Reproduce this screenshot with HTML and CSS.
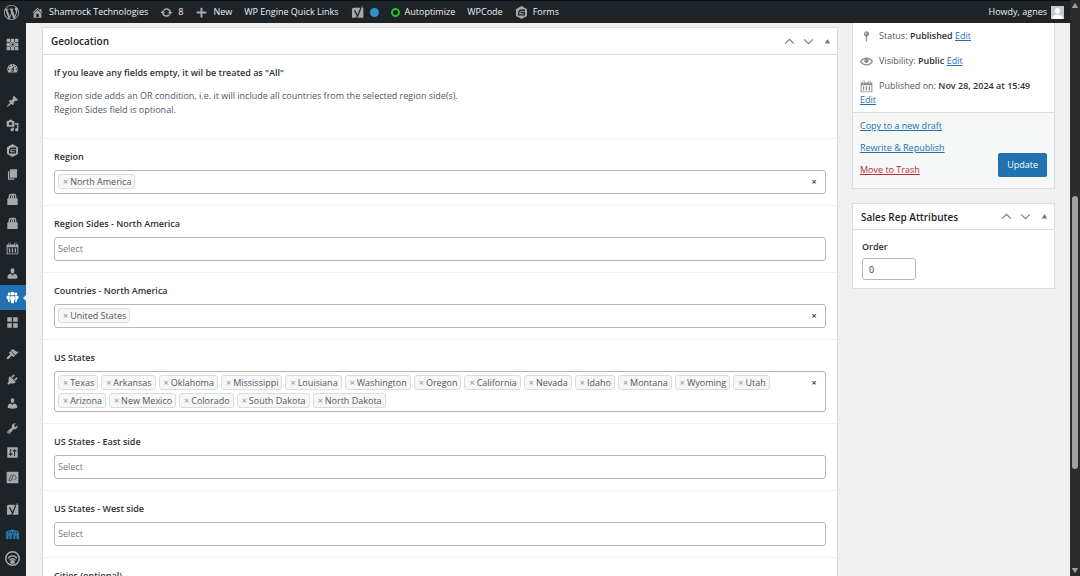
FILE: index.html
```html
<!DOCTYPE html>
<html lang="en">
<head>
    <meta charset="UTF-8">
    <meta name="viewport" content="width=device-width, initial-scale=1.0">
    <title>Edit Sales Rep</title>
    <link rel="stylesheet" href="styles.css">
</head>
<body>
    <svg class="sprite" aria-hidden="true">
        <symbol id="i-wp" viewBox="0 0 20 20"><path d="M20 10c0-5.51-4.49-10-10-10C4.48 0 0 4.49 0 10c0 5.52 4.48 10 10 10 5.51 0 10-4.48 10-10zM7.78 15.37L4.37 6.22c.55-.02 1.17-.08 1.17-.08.5-.06.44-1.13-.06-1.11 0 0-1.45.11-2.37.11-.18 0-.37 0-.58-.01C4.12 2.69 6.87 1.11 10 1.11c2.33 0 4.45.87 6.05 2.34-.68-.11-1.65.39-1.65 1.58 0 .74.45 1.36.9 2.1.35.61.55 1.36.55 2.46 0 1.49-1.4 5-1.4 5l-3.03-8.37c.54-.02.82-.17.82-.17.5-.05.44-1.25-.06-1.22 0 0-1.44.12-2.38.12-.87 0-2.33-.12-2.33-.12-.5-.03-.56 1.2-.06 1.22l.92.08 1.26 3.41zM17.41 10c.24-.64.74-1.87.43-4.25.7 1.29 1.05 2.71 1.05 4.25 0 3.29-1.73 6.24-4.4 7.78.97-2.59 1.94-5.2 2.92-7.78zM6.1 18.09C3.12 16.65 1.11 13.53 1.11 10c0-1.3.23-2.48.72-3.59C3.25 10.3 4.67 14.2 6.1 18.09zm4.03-6.63l2.58 6.98c-.86.29-1.76.45-2.71.45-.79 0-1.57-.11-2.29-.33.81-2.38 1.62-4.74 2.42-7.1z"/></symbol>
        <symbol id="i-home" viewBox="0 0 20 20"><path d="M16 8.5l1.53 1.53-1.06 1.06L10 4.6l-6.47 6.49-1.06-1.06L10 2.5l4 4v-2h2v4zm-6-2.46l6 5.99V18H4v-5.97zM12 17v-5H8v5h4z"/></symbol>
        <symbol id="i-update" viewBox="0 0 20 20"><path d="M10.2 3.28c3.53 0 6.43 2.61 6.92 6h2.08l-3.5 4-3.5-4h2.32c-.45-1.97-2.21-3.45-4.32-3.45-1.45 0-2.73.71-3.54 1.78L4.95 5.66C6.23 4.2 8.11 3.28 10.2 3.28zm-.4 13.44c-3.52 0-6.43-2.61-6.92-6H.8l3.5-4c1.17 1.33 2.33 2.67 3.5 4H5.48c.45 1.97 2.21 3.45 4.32 3.45 1.45 0 2.73-.71 3.54-1.78l1.71 1.95c-1.28 1.46-3.15 2.38-5.25 2.38z"/></symbol>
        <symbol id="i-plus" viewBox="0 0 20 20"><path d="M8.5 2.500h3v6h6v3h-6v6h-3v-6h-6v-3h6z"/></symbol>
        <symbol id="i-yoast" viewBox="0 0 20 20"><path d="M4 2.500h15v15.500H1.500V5A2.500 2.500 0 0 1 4 2.500z"/><path class="cut" d="M5.500 6.500l4 8M16 1l-6 15q-1 3-4 3"/><path class="line thin" d="M17.500 0l-2 5"/></symbol>
        <symbol id="i-gravity" viewBox="0 0 20 20"><path d="M10 0l7.500 4.300q1 .6 1 1.700v8q0 1.100-1 1.700L10 20l-7.500-4.300q-1-.6-1-1.700V6q0-1.100 1-1.700z"/><path class="cut" d="M15.500 6.500H9Q5.500 6.500 5.500 13.500h9V10H8.500"/></symbol>
        <symbol id="i-grid" viewBox="0 0 20 20"><path fill-rule="evenodd" d="M1 1h5.500v5.500H1zM7.500 1h5v5.500h-5zM13.500 1H19v5.500h-5.500zM1 7.500h5.500v5H1zM13.500 7.500H19v5h-5.500zM1 13.500h5.500V19H1zM7.500 13.500h5V19h-5zM13.500 13.500H19V19h-5.500zM6 6h8v8H6zM8.500 8.500v3h3v-3z"/></symbol>
        <symbol id="i-dash" viewBox="0 0 20 20"><path d="M3.760 16h12.480c1.100-1.370 1.760-3.110 1.760-5 0-4.420-3.580-8-8-8s-8 3.580-8 8c0 1.890.66 3.630 1.760 5zM10 4c.55 0 1 .45 1 1s-.45 1-1 1-1-.45-1-1 .45-1 1-1zM6 6c.55 0 1 .45 1 1s-.45 1-1 1-1-.45-1-1 .45-1 1-1zm8 0c.55 0 1 .45 1 1s-.45 1-1 1-1-.45-1-1 .45-1 1-1zm-5.370 5.550L12 7v6c0 1.100-.9 2-2 2s-2-.9-2-2c0-.57.24-1.080.63-1.450zM4 10c.55 0 1 .45 1 1s-.45 1-1 1-1-.45-1-1 .45-1 1-1zm12 0c.55 0 1 .45 1 1s-.45 1-1 1-1-.45-1-1 .45-1 1-1zm-5 3c0-.55-.45-1-1-1s-1 .45-1 1 .45 1 1 1 1-.45 1-1z" fill-rule="evenodd"/></symbol>
        <symbol id="i-post" viewBox="0 0 20 20"><path d="M10.440 3.020l1.820-1.820 6.360 6.350-1.830 1.820c-1.050-.68-2.480-.57-3.410.36l-.75.75c-.92.93-1.040 2.350-.35 3.410l-1.830 1.820-2.410-2.410-2.800 2.790c-.42.42-3.380 2.710-3.800 2.290s1.860-3.390 2.280-3.810l2.790-2.790L4.100 9.360l1.830-1.820c1.050.69 2.480.57 3.400-.36l.75-.75c.93-.92 1.050-2.350.36-3.410z"/></symbol>
        <symbol id="i-media" viewBox="0 0 20 20"><path fill-rule="evenodd" d="M13 11V4c0-.55-.45-1-1-1h-1.670L9 1H5L3.670 3H2c-.55 0-1 .45-1 1v7c0 .55.45 1 1 1h10c.55 0 1-.45 1-1zM7 4.500c1.380 0 2.500 1.120 2.500 2.500S8.380 9.500 7 9.500 4.500 8.380 4.500 7 5.620 4.500 7 4.500zM14 6h5v10.500c0 1.380-1.120 2.500-2.500 2.500S14 17.880 14 16.500s1.120-2.500 2.500-2.500c.17 0 .34.02.5.05V9h-3V6zm-4 8.050V13h2v3.500c0 1.380-1.120 2.500-2.500 2.500S7 17.880 7 16.500 8.120 14 9.500 14c.17 0 .34.02.5.05z"/></symbol>
        <symbol id="i-page" viewBox="0 0 20 20"><path d="M6 15V2h11v13H6zm-1 1h8v2H3V5h2v11z"/></symbol>
        <symbol id="i-bag" viewBox="0 0 20 20"><path d="M2 18.500V10q0-2 2-2h12q2 0 2 2v8.500z"/><path class="line" d="M5 9V6q0-4 3-4h4q3 0 3 4v3M8.500 9V5.500q0-1.500 1.500-1.500t1.500 1.500V9"/></symbol>
        <symbol id="i-cal" viewBox="0 0 20 20"><path fill-rule="evenodd" d="M1 4h3V1h3v3h6V1h3v3h3v15H1zM2.500 8v9.500h15V8zM5 1.500v4h1v-4zM14 1.500v4h1v-4zM4.500 9.500h2V16h-2zM9 9.500h2V16H9zM13.500 9.500h2V16h-2z"/></symbol>
        <symbol id="i-person" viewBox="0 0 20 20"><path d="M10 10c-2.300 0-3-2.600-3-4.500C7 3.300 8 2 10 2s3 1.300 3 3.500C13 7.400 12.300 10 10 10zM2.500 17.500v-3.300c0-2 2.500-3.200 5-3.700L10 13l2.500-2.500c2.500.5 5 1.700 5 3.700v3.300q-7.500 1.500-15 0z"/></symbol>
        <symbol id="i-groups" viewBox="0 0 20 20"><circle cx="5" cy="4.500" r="2.300"/><circle cx="15" cy="4.500" r="2.300"/><circle cx="10" cy="4" r="3"/><path d="M.5 8.500q1-1.500 4-1.500l1.500.5L5.500 13 6 17H3.500L3 12.500H1.500zM19.500 8.500q-1-1.500-4-1.500L14 7.500l.5 5.500-.5 4h2.500l.5-4.500h1.500zM6.500 8.500q3.500-1.500 7 0v5.500l-1 .5-.5 4.500H8l-.5-4.500-1-.5z"/></symbol>
        <symbol id="i-tiles" viewBox="0 0 20 20"><path d="M9 9V2H2v7h7zm9 0V2h-7v7h7zm-9 9v-7H2v7h7zm9 0v-7h-7v7h7z"/></symbol>
        <symbol id="i-brush" viewBox="0 0 20 20"><path d="M14.480 11.060L7.410 3.990l1.500-1.500c.5-.56 2.300-.47 3.510.32 1.210.8 1.430 1.280 2.910 2.100 1.180.64 2.450 1.260 4.450.85zm-.71.71L6.700 4.700 4.930 6.470c-.39.39-.39 1.020 0 1.410l1.060 1.060c.39.39.39 1.030 0 1.420-.6.6-1.430 1.110-2.210 1.690-.35.26-.7.53-1.010.84C1.430 14.230.4 16.080 1.400 17.070c.99 1 2.840-.03 4.180-1.360.31-.31.58-.66.85-1.020.57-.78 1.080-1.610 1.690-2.210.39-.39 1.020-.39 1.410 0l1.060 1.060c.39.39 1.020.39 1.410 0z"/></symbol>
        <symbol id="i-plug" viewBox="0 0 20 20"><path d="M13.110 4.360L9.870 7.600 8 5.730l3.240-3.240c.35-.34 1.050-.2 1.560.32.52.51.66 1.210.31 1.550zm-8 1.770l.91-1.120 9.010 9.010-1.190.84c-.71.71-2.630 1.160-3.820 1.160H6.140L4.900 17.260c-.59.59-1.540.59-2.120 0-.59-.58-.59-1.530 0-2.120l1.240-1.240v-3.880c0-1.130.4-3.190 1.090-3.890zm7.260 3.970l3.240-3.240c.34-.35 1.040-.21 1.550.31.52.51.66 1.210.31 1.550l-3.240 3.250z"/></symbol>
        <symbol id="i-user" viewBox="0 0 20 20"><path d="M10 9.250c-2.270 0-2.730-3.440-2.730-3.440C7 4.020 7.820 2 9.970 2c2.160 0 2.980 2.020 2.710 3.810 0 0-.41 3.440-2.680 3.440zm0 2.570L12.720 10c2.390 0 4.520 2.330 4.520 4.530v2.490s-3.650 1.130-7.240 1.130c-3.650 0-7.240-1.130-7.240-1.130v-2.490c0-2.250 1.940-4.480 4.470-4.480z"/></symbol>
        <symbol id="i-tools" viewBox="0 0 20 20"><path fill-rule="evenodd" d="M16.680 9.770c-1.340 1.340-3.300 1.670-4.950.99l-5.410 6.520c-.99.99-2.590.99-3.580 0s-.99-2.590 0-3.570l6.520-5.420c-.68-1.650-.35-3.610.99-4.950 1.280-1.280 3.120-1.620 4.720-1.060l-2.890 2.890 2.820 2.820 2.860-2.870c.53 1.580.18 3.390-1.080 4.650zM3.810 16.210c.4.39 1.040.39 1.430 0 .4-.4.4-1.040 0-1.430-.39-.4-1.030-.4-1.430 0-.39.39-.39 1.030 0 1.430z"/></symbol>
        <symbol id="i-settings" viewBox="0 0 20 20"><path fill-rule="evenodd" d="M2 2h16v16H2zM6.500 4.500v7H4.500v2h2v2h1.500v-2h2v-2H8v-7zM12.500 4.500v2h-2v2h2v7H14v-7h2v-2h-2v-2z"/></symbol>
        <symbol id="i-code" viewBox="0 0 20 20"><rect x="1" y="1" width="18" height="18" rx="1.500"/><path class="cut thin" d="M7 14.500H4.500l4-9M8 15l3.500-10M12.500 6l3.500 4-3.500 4.500"/></symbol>
        <symbol id="i-store" viewBox="0 0 20 20"><path fill-rule="evenodd" d="M0 8q0-3 3-4h3l4-2 4 2h3q3 1 3 4v9h-4v-5h-1.500v5H11v-7H9v7H5.500v-5H4v5H0zM3 6v2h2V6zM7 6v2h2V6zM11 6v2h2V6zM15 6v2h2V6z"/></symbol>
        <symbol id="i-signal" viewBox="0 0 20 20"><circle class="line" cx="10" cy="10" r="9"/><path class="line" d="M4 9.500q6-6.500 12 0M6 12.500q4-4.500 8 0"/><path d="M10 12a3 3 0 0 1 3 3 2 2 0 0 1-2 2H9a2 2 0 0 1-2-2 3 3 0 0 1 3-3z"/></symbol>
        <symbol id="i-status" viewBox="0 0 20 20"><path fill-rule="evenodd" d="M14 6c0 1.860-1.280 3.410-3 3.860V16c0 1-2 2-2 2V9.860C7.280 9.410 6 7.860 6 6c0-2.210 1.790-4 4-4s4 1.790 4 4zM8 5c0 .55.45 1 1 1s1-.45 1-1-.45-1-1-1-1 .45-1 1z"/></symbol>
        <symbol id="i-eye" viewBox="0 0 20 20"><path fill-rule="evenodd" d="M19.700 9.400C17.700 6 14 3.900 10 3.900S2.300 6 .3 9.400L0 10l.3.6c2 3.400 5.700 5.500 9.700 5.500s7.700-2.100 9.700-5.500l.3-.6-.3-.6zM10 14.100c-3.100 0-6-1.600-7.700-4.100C3.600 8 5.700 6.600 8 6.100c-.9.6-1.500 1.700-1.500 2.900 0 1.900 1.600 3.500 3.500 3.500s3.500-1.600 3.500-3.500c0-1.200-.6-2.300-1.500-2.900 2.300.5 4.400 1.900 5.700 3.900-1.700 2.500-4.600 4.100-7.700 4.100z"/></symbol>
        <symbol id="i-up" viewBox="0 0 20 20"><path class="line" d="M2 14l8-8 8 8"/></symbol>
        <symbol id="i-down" viewBox="0 0 20 20"><path class="line" d="M2 6l8 8 8-8"/></symbol>
        <symbol id="i-toggle" viewBox="0 0 20 20"><path d="M10 3l8 13H2z"/></symbol>
    </svg>

    <div class="window">
        <div class="app">
            <header class="adminbar">
                <a href="#" class="wp-logo" aria-label="About WordPress"><svg><use href="#i-wp"/></svg></a>
                <a href="#"><svg><use href="#i-home"/></svg>Shamrock Technologies</a>
                <a href="#"><svg><use href="#i-update"/></svg>8</a>
                <a href="#"><svg><use href="#i-plus"/></svg>New</a>
                <a href="#">WP Engine Quick Links</a>
                <a href="#" aria-label="Yoast SEO"><svg><use href="#i-yoast"/></svg><span class="dot"></span></a>
                <a href="#"><span class="ring"></span>Autoptimize</a>
                <a href="#">WPCode</a>
                <a href="#"><svg><use href="#i-gravity"/></svg>Forms</a>
                <a href="#" class="account">Howdy, agnes
                    <svg class="avatar" viewBox="0 0 20 20"><rect class="avatar-bg" width="20" height="20"/><path d="M10 3c2.500 0 4 2 4 4.500S12.500 12 10 12 6 10 6 7.500 7.500 3 10 3zM2 20q0-7 8-7t8 7z"/></svg>
                </a>
            </header>

            <div class="body">
                <nav class="menu" aria-label="Main menu">
                    <a href="#" aria-label="Panel"><svg><use href="#i-grid"/></svg></a>
                    <a href="#" aria-label="Dashboard"><svg><use href="#i-dash"/></svg></a>
                    <div class="separator"></div>
                    <a href="#" aria-label="Posts"><svg><use href="#i-post"/></svg></a>
                    <a href="#" aria-label="Media"><svg><use href="#i-media"/></svg></a>
                    <a href="#" aria-label="Forms"><svg><use href="#i-gravity"/></svg></a>
                    <a href="#" aria-label="Pages"><svg><use href="#i-page"/></svg></a>
                    <a href="#" aria-label="Products"><svg><use href="#i-bag"/></svg></a>
                    <a href="#" aria-label="Product lines"><svg><use href="#i-bag"/></svg></a>
                    <a href="#" aria-label="Events"><svg><use href="#i-cal"/></svg></a>
                    <a href="#" aria-label="Team"><svg><use href="#i-person"/></svg></a>
                    <a href="#" aria-label="Sales Reps" class="current"><svg><use href="#i-groups"/></svg></a>
                    <a href="#" aria-label="Blocks"><svg><use href="#i-tiles"/></svg></a>
                    <div class="separator"></div>
                    <a href="#" aria-label="Appearance"><svg><use href="#i-brush"/></svg></a>
                    <a href="#" aria-label="Plugins"><svg><use href="#i-plug"/></svg></a>
                    <a href="#" aria-label="Users"><svg><use href="#i-user"/></svg></a>
                    <a href="#" aria-label="Tools"><svg><use href="#i-tools"/></svg></a>
                    <a href="#" aria-label="Settings"><svg><use href="#i-settings"/></svg></a>
                    <a href="#" aria-label="Code Snippets"><svg><use href="#i-code"/></svg></a>
                    <div class="separator"></div>
                    <a href="#" aria-label="Yoast SEO"><svg><use href="#i-yoast"/></svg></a>
                    <a href="#" aria-label="Store" class="store"><svg><use href="#i-store"/></svg></a>
                    <a href="#" aria-label="Signal" class="signal"><svg><use href="#i-signal"/></svg></a>
                </nav>

                <main class="content">
                    <section class="panel geo">
                        <div class="panel-head">
                            <h2>Geolocation</h2>
                            <button type="button" aria-label="Move up"><svg><use href="#i-up"/></svg></button>
                            <button type="button" aria-label="Move down"><svg><use href="#i-down"/></svg></button>
                            <button type="button" class="toggle" aria-label="Toggle panel"><svg><use href="#i-toggle"/></svg></button>
                        </div>
                        <div class="intro">
                            <h3>If you leave any fields empty, it wil be treated as "All"</h3>
                            <p>Region side adds an OR condition, i.e. it will include all countries from the selected region side(s).<br>Region Sides field is optional.</p>
                        </div>
                        <div class="field">
                            <label for="region">Region</label>
                            <div class="select">
                                <div class="tags">
                                    <span class="tag"><button type="button">×</button>North America</span>
                                    <input type="text" id="region">
                                </div>
                                <button type="button" class="clear" aria-label="Clear">×</button>
                            </div>
                        </div>
                        <div class="field">
                            <label for="region-sides">Region Sides - North America</label>
                            <div class="select"><input type="text" id="region-sides" placeholder="Select"></div>
                        </div>
                        <div class="field">
                            <label for="countries">Countries - North America</label>
                            <div class="select">
                                <div class="tags">
                                    <span class="tag"><button type="button">×</button>United States</span>
                                    <input type="text" id="countries">
                                </div>
                                <button type="button" class="clear" aria-label="Clear">×</button>
                            </div>
                        </div>
                        <div class="field">
                            <label for="states">US States</label>
                            <div class="select">
                                <div class="tags">
                                    <span class="tag"><button type="button">×</button>Texas</span>
                                    <span class="tag"><button type="button">×</button>Arkansas</span>
                                    <span class="tag"><button type="button">×</button>Oklahoma</span>
                                    <span class="tag"><button type="button">×</button>Mississippi</span>
                                    <span class="tag"><button type="button">×</button>Louisiana</span>
                                    <span class="tag"><button type="button">×</button>Washington</span>
                                    <span class="tag"><button type="button">×</button>Oregon</span>
                                    <span class="tag"><button type="button">×</button>California</span>
                                    <span class="tag"><button type="button">×</button>Nevada</span>
                                    <span class="tag"><button type="button">×</button>Idaho</span>
                                    <span class="tag"><button type="button">×</button>Montana</span>
                                    <span class="tag"><button type="button">×</button>Wyoming</span>
                                    <span class="tag"><button type="button">×</button>Utah</span>
                                    <span class="tag"><button type="button">×</button>Arizona</span>
                                    <span class="tag"><button type="button">×</button>New Mexico</span>
                                    <span class="tag"><button type="button">×</button>Colorado</span>
                                    <span class="tag"><button type="button">×</button>South Dakota</span>
                                    <span class="tag"><button type="button">×</button>North Dakota</span>
                                    <input type="text" id="states">
                                </div>
                                <button type="button" class="clear" aria-label="Clear">×</button>
                            </div>
                        </div>
                        <div class="field">
                            <label for="states-east">US States - East side</label>
                            <div class="select"><input type="text" id="states-east" placeholder="Select"></div>
                        </div>
                        <div class="field">
                            <label for="states-west">US States - West side</label>
                            <div class="select"><input type="text" id="states-west" placeholder="Select"></div>
                        </div>
                        <div class="field">
                            <label for="cities">Cities (optional)</label>
                            <div class="select"><input type="text" id="cities" placeholder="Select"></div>
                        </div>
                    </section>

                    <aside class="side">
                        <section class="panel publish">
                            <div class="publish-info">
                                <p><svg><use href="#i-status"/></svg>Status: <b>Published</b> <a href="#">Edit</a></p>
                                <p><svg><use href="#i-eye"/></svg>Visibility: <b>Public</b> <a href="#">Edit</a></p>
                                <p><svg><use href="#i-cal"/></svg>Published on: <b>Nov 28, 2024 at 15:49</b> <a href="#" class="edit-date">Edit</a></p>
                            </div>
                            <div class="publish-actions">
                                <div class="links">
                                    <a href="#">Copy to a new draft</a>
                                    <a href="#">Rewrite &amp; Republish</a>
                                    <a href="#" class="trash">Move to Trash</a>
                                </div>
                                <button type="submit" class="update">Update</button>
                            </div>
                        </section>

                        <section class="panel">
                            <div class="panel-head">
                                <h2>Sales Rep Attributes</h2>
                                <button type="button" aria-label="Move up"><svg><use href="#i-up"/></svg></button>
                                <button type="button" aria-label="Move down"><svg><use href="#i-down"/></svg></button>
                                <button type="button" class="toggle" aria-label="Toggle panel"><svg><use href="#i-toggle"/></svg></button>
                            </div>
                            <div class="order">
                                <label for="order">Order</label>
                                <input type="text" id="order" value="0">
                            </div>
                        </section>
                    </aside>
                </main>
            </div>
        </div>

        <div class="scrollbar">
            <svg><use href="#i-toggle"/></svg>
            <div class="track"><div class="thumb"></div></div>
            <svg class="flip"><use href="#i-toggle"/></svg>
        </div>
    </div>
</body>
</html>
```
FILE: styles.css
```css
* {
    box-sizing: border-box;
}
body {
    margin: 0;
    font-family: "Open Sans", "Noto Sans", sans-serif;
    font-size: 9px;
    line-height: 14px;
    color: #50575e;
    background-color: #f0f0f1;
}
h2, h3, p {
    margin: 0;
}
a {
    color: #2271b1;
}
button, input {
    font: inherit;
    color: inherit;
    margin: 0;
    padding: 0;
    border: 0;
    background: none;
}
svg {
    fill: currentColor;
    flex: none;
}
.sprite {
    position: absolute;
    width: 0;
    height: 0;
}
.line {
    fill: none;
    stroke: currentColor;
    stroke-width: 2;
}
.cut {
    fill: none;
    stroke: #1d2327;
    stroke-width: 2;
}
.thin {
    stroke-width: 1;
}
.window {
    display: flex;
    height: 100vh;
    overflow: hidden;
}
.app {
    flex: 1;
    min-width: 0;
    display: flex;
    flex-direction: column;
}

/* top bar */
.adminbar {
    display: flex;
    align-items: center;
    gap: 12px;
    height: 23px;
    padding: 0 6px 0 4px;
    background-color: #1d2327;
    border-top: 1px solid #0b0e10;
    flex: none;
}
.adminbar a {
    display: flex;
    align-items: center;
    gap: 5px;
    color: #f0f0f1;
    text-decoration: none;
    white-space: nowrap;
}
.adminbar svg {
    width: 13px;
    height: 13px;
    color: #a7aaad;
}
.adminbar .wp-logo svg {
    width: 15px;
    height: 15px;
}
.dot {
    width: 9px;
    height: 9px;
    margin-left: 1px;
    border-radius: 50%;
    background-color: #2e8fcb;
}
.ring {
    width: 9px;
    height: 9px;
    border: 2px solid #1fc41f;
    border-radius: 50%;
}
.adminbar .account {
    gap: 4px;
    margin-left: auto;
}
.adminbar .avatar {
    color: #fff;
}
.avatar-bg {
    fill: #c8c8c8;
}

/* left menu */
.body {
    flex: 1;
    min-height: 0;
    display: flex;
}
.menu {
    width: 26px;
    flex: none;
    display: flex;
    flex-direction: column;
    padding: 9px 0 5px;
    background-color: #1d2327;
}
.menu a {
    flex: 1;
    max-height: 25px;
    display: flex;
    align-items: center;
    padding-left: 6px;
    color: #a7aaad;
}
.menu svg {
    width: 13px;
    height: 13px;
}
.menu .separator {
    height: 8px;
}
.menu .current {
    position: relative;
    color: #fff;
    background-color: #2271b1;
}
.menu .current::after {
    content: "";
    position: absolute;
    right: 0;
    border: 3px solid transparent;
    border-right-color: #f0f0f1;
    border-left: 0;
}
.menu .store {
    color: #2277a8;
}
.menu .signal {
    padding-left: 5px;
}
.menu .signal svg {
    width: 15px;
    height: 15px;
}

/* panels */
.content {
    flex: 1;
    min-width: 0;
    display: flex;
    align-items: flex-start;
    gap: 14px;
    padding: 0 15px 0 16px;
}
.panel {
    background-color: #fff;
    border: 1px solid #dcdcde;
}
.geo {
    flex: 1;
    min-width: 0;
    margin-top: 4px;
}
.panel-head {
    display: flex;
    align-items: center;
    height: 27px;
    padding-left: 8px;
    border-bottom: 1px solid #dcdcde;
}
.panel-head h2 {
    flex: 1;
    font-size: 10px;
    font-weight: 600;
    color: #1d2327;
}
.panel-head button {
    display: flex;
    justify-content: center;
    width: 19px;
    color: #787c82;
}
.panel-head svg {
    width: 11px;
    height: 11px;
}
.panel-head .toggle svg {
    width: 7px;
    height: 7px;
}
.intro {
    padding: 11px 11px 21px;
}
.intro h3 {
    margin-bottom: 10px;
    font-size: 9px;
    line-height: 13px;
    font-weight: 600;
    color: #2c3338;
}
.field {
    padding: 11px 11px 11px;
    border-top: 1px solid #f0f0f1;
}
label {
    display: block;
    margin-bottom: 7px;
    line-height: 13px;
    font-weight: 600;
    color: #2c3338;
}
.select {
    display: flex;
    align-items: flex-start;
    min-height: 24px;
    padding: 3px;
    border: 1px solid #b4b9be;
    border-radius: 3px;
}
.select input {
    flex: 1;
    min-width: 10px;
    width: 10px;
    height: 15px;
}
.select input::placeholder {
    color: #757a80;
    opacity: 1;
}
.tags {
    flex: 1;
    display: flex;
    flex-wrap: wrap;
    gap: 3px;
}
.tag {
    display: flex;
    align-items: center;
    gap: 2px;
    height: 15px;
    padding: 0 3px 0 4px;
    background-color: #f6f7f7;
    border: 1px solid #dcdcde;
    border-radius: 3px;
    white-space: nowrap;
}
.tag button {
    color: #8c8f94;
}
.clear {
    width: 16px;
    line-height: 16px;
    font-weight: 700;
    color: #3c434a;
}

/* right column */
.side {
    width: 203px;
    flex: none;
}
.publish {
    margin-bottom: 14px;
    border-top: 0;
}
.publish-info {
    padding: 6px 7px 5px;
}
.publish-info p {
    margin-bottom: 11px;
}
.publish-info p:last-child {
    margin-bottom: 0;
}
.publish-info svg {
    width: 13px;
    height: 13px;
    margin-right: 6px;
    vertical-align: middle;
    color: #8c8f94;
}
.publish-info b {
    font-weight: 600;
    color: #2c3338;
}
.edit-date {
    display: table;
}
.publish-actions {
    display: flex;
    align-items: flex-end;
    justify-content: space-between;
    padding: 6px 7px 11px;
    background-color: #f6f7f7;
    border-top: 1px solid #dcdcde;
}
.links {
    display: flex;
    flex-direction: column;
    align-items: flex-start;
    gap: 8px;
}
.publish-actions .trash {
    color: #b32d2e;
}
.update {
    height: 24px;
    padding: 0 9px;
    color: #fff;
    background-color: #2271b1;
    border-radius: 2px;
}
.side .panel-head {
    height: 26px;
}
.order {
    padding: 10px 9px 8px;
}
.order label {
    margin-bottom: 5px;
}
.order input {
    display: block;
    width: 54px;
    height: 22px;
    padding: 0 6px;
    border: 1px solid #b4b9be;
    border-radius: 3px;
    color: #2c3338;
}

/* scrollbar */
.scrollbar {
    width: 10px;
    flex: none;
    display: flex;
    flex-direction: column;
    align-items: center;
    background-color: #2b2b2b;
    color: #9f9f9f;
}
.scrollbar svg {
    width: 8px;
    height: 11px;
}
.scrollbar .flip {
    transform: rotate(180deg);
}
.track {
    flex: 1;
    width: 6px;
    padding-top: 185px;
}
.thumb {
    height: 75%;
    max-height: 273px;
    border-radius: 3px;
    background-color: #9f9f9f;
}
```
